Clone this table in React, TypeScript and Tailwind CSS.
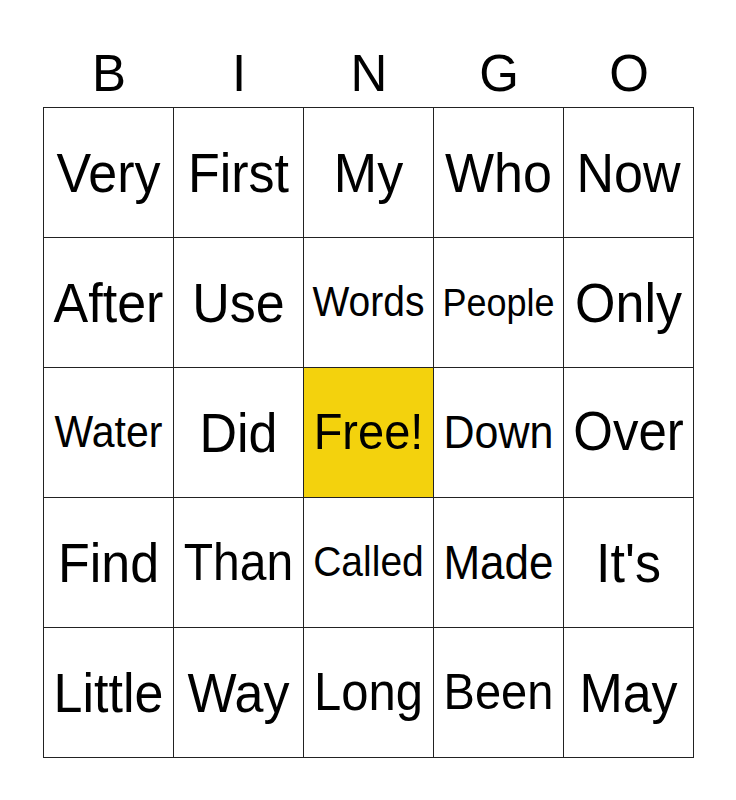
const letters = ["B", "I", "N", "G", "O"];

const cells: { word: string; size: string; free?: boolean }[] = [
  { word: "Very", size: "text-[52px]" },
  { word: "First", size: "text-[52px]" },
  { word: "My", size: "text-[52px]" },
  { word: "Who", size: "text-[52px]" },
  { word: "Now", size: "text-[52px]" },
  { word: "After", size: "text-[52px]" },
  { word: "Use", size: "text-[52px]" },
  { word: "Words", size: "text-[39px]" },
  { word: "People", size: "text-[36px]" },
  { word: "Only", size: "text-[52px]" },
  { word: "Water", size: "text-[41px]" },
  { word: "Did", size: "text-[52px]" },
  { word: "Free!", size: "text-[47px]", free: true },
  { word: "Down", size: "text-[43px]" },
  { word: "Over", size: "text-[51px]" },
  { word: "Find", size: "text-[52px]" },
  { word: "Than", size: "text-[48px]" },
  { word: "Called", size: "text-[39px]" },
  { word: "Made", size: "text-[44px]" },
  { word: "It's", size: "text-[52px]" },
  { word: "Little", size: "text-[52px]" },
  { word: "Way", size: "text-[52px]" },
  { word: "Long", size: "text-[49px]" },
  { word: "Been", size: "text-[47px]" },
  { word: "May", size: "text-[52px]" },
];

export default function App() {
  return (
    <div className="w-[736px] h-[800px] bg-white text-black font-['Liberation_Sans',Arial,sans-serif]">
      <div className="pl-[43px]">
        {/* header letters */}
        <div className="flex h-[107px] items-end pb-[8px] pl-px">
          {letters.map((l) => (
            <div key={l} className="w-[130px] text-center text-[51px] leading-none">
              {l}
            </div>
          ))}
        </div>

        {/* card */}
        <div className="grid w-[651px] grid-cols-[repeat(5,130px)] border-l border-t border-[#222]">
          {cells.map((c) => (
            <div
              key={c.word}
              className={`flex h-[130px] items-center justify-center whitespace-nowrap border-b border-r border-[#222] ${c.size} ${
                c.free ? "bg-[#f3d20d]" : "bg-white"
              }`}
            >
              <span className="scale-y-[1.08]">{c.word}</span>
            </div>
          ))}
        </div>
      </div>
    </div>
  );
}
